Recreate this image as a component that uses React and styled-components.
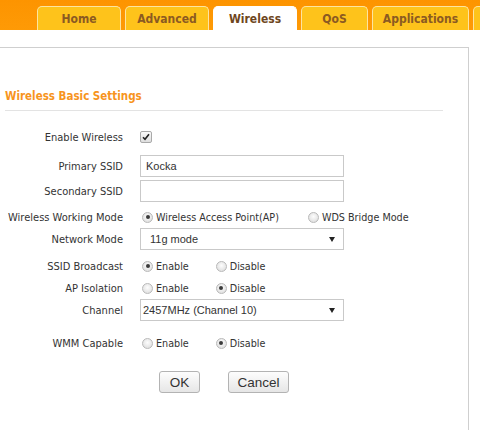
import React from "react";
import styled, { createGlobalStyle } from "styled-components";

const GlobalStyle = createGlobalStyle`
	body {
		margin: 0;
		background: #fff;
		font-family: "DejaVu Sans Condensed", "DejaVu Sans", sans-serif;
	}
`;

const Page = styled.div`
	width: 480px;
	height: 430px;
	overflow: hidden;
	background: #fff;
`;

const Header = styled.div`
	height: 30px;
	background: linear-gradient(180deg, #fd9400 0%, #fe9a06 100%);
	display: flex;
	align-items: flex-end;
	gap: 4px;
	padding-left: 37px;
	overflow: hidden;
`;

const Tab = styled.div`
	flex: none;
	box-sizing: border-box;
	width: ${(p) => p.$w}px;
	height: 24px;
	border: 1px solid ${(p) => (p.$active ? "#fff" : "#fde4a0")};
	border-bottom: none;
	border-radius: 5px 5px 0 0;
	background: ${(p) => (p.$active ? "#fff" : "#fec31b")};
	color: ${(p) => (p.$active ? "#6e4620" : "#8b5a22")};
	font-weight: bold;
	font-size: 12px;
	display: flex;
	align-items: center;
	justify-content: center;
`;

const Content = styled.div`
	margin-top: 17px;
	width: 469px;
	box-sizing: border-box;
	border-top: 1px solid #cfcfcf;
	border-right: 1px solid #cfcfcf;
	height: 400px;
	padding: 41px 0 0 5px;
`;

const Title = styled.div`
	width: 438px;
	color: #f7941d;
	font-weight: bold;
	font-size: 11.5px;
	padding-bottom: 7px;
	border-bottom: 1px solid #e3e3e3;
`;

const Form = styled.div`
	margin-left: -5px;
	padding-top: 15px;
`;

const Row = styled.div`
	display: flex;
	align-items: center;
	height: 22px;
	margin-top: ${(p) => p.$mt || 0}px;
`;

const Label = styled.div`
	width: 123px;
	flex: none;
	text-align: right;
	font-size: 11px;
	color: #333;
	padding-right: 17px;
`;

const Controls = styled.div`
	display: flex;
	align-items: center;
`;

const CheckBox = styled.span`
	width: 10px;
	height: 10px;
	border: 1px solid #a9a9a9;
	border-radius: 2px;
	background: linear-gradient(#fafafa, #dedede);
	display: flex;
	align-items: center;
	justify-content: center;
`;

const Option = styled.label`
	display: flex;
	align-items: center;
	font-size: 10.7px;
	color: #333;
	margin-left: 2px;
	margin-right: ${(p) => p.$mr}px;
`;

const RadioDot = styled.span`
	width: 9px;
	height: 9px;
	border: 1px solid #b9b9b9;
	border-radius: 50%;
	background: radial-gradient(circle at 50% 40%, #fdfdfd, #d8d8d8);
	margin-right: 3px;
	display: flex;
	align-items: center;
	justify-content: center;

	&::after {
		content: "";
		width: 4px;
		height: 4px;
		border-radius: 50%;
		background: ${(p) => (p.$on ? "#3a3a3a" : "transparent")};
	}
`;

const Field = styled.div`
	box-sizing: border-box;
	width: 204px;
	height: 22px;
	border: 1px solid #c9c9c9;
	background: #fff;
	display: flex;
	align-items: center;
	padding-left: ${(p) => p.$pl}px;
	padding-right: 8px;
	font-family: "Liberation Sans", Arial, sans-serif;
	font-size: 11px;
	color: #333;
`;

const FieldText = styled.span`
	flex: 1;
`;

const Arrow = styled.span`
	width: 0;
	height: 0;
	border-left: 3px solid transparent;
	border-right: 3px solid transparent;
	border-top: 5px solid #222;
`;

const Buttons = styled.div`
	display: flex;
	gap: 28px;
	padding-left: 159px;
	margin-top: 17px;
`;

const Button = styled.button`
	box-sizing: border-box;
	width: ${(p) => p.$w}px;
	height: 22px;
	border: 1px solid #b3b3b3;
	border-radius: 3px;
	background: linear-gradient(#fdfdfd, #e6e6e6);
	font-family: "Liberation Sans", Arial, sans-serif;
	font-size: 13.5px;
	color: #333;
	padding: 0;
`;

const tabs = [
	{ name: "Home", w: 84 },
	{ name: "Advanced", w: 84 },
	{ name: "Wireless", w: 84, active: true },
	{ name: "QoS", w: 67 },
	{ name: "Applications", w: 97 },
	{ name: "", w: 40 },
];

function Radio({ on, children, mr = 28 }) {
	return (
		<Option $mr={mr}>
			<RadioDot $on={on} />
			{children}
		</Option>
	);
}

function Toggle({ value }) {
	return (
		<Controls>
			<Radio on={value} mr={25}>Enable</Radio>
			<Radio on={!value}>Disable</Radio>
		</Controls>
	);
}

export default function App() {
	return (
		<Page>
			<GlobalStyle />
			<Header>
				{tabs.map((t, i) => (
					<Tab key={i} $w={t.w} $active={t.active}>
						{t.name}
					</Tab>
				))}
			</Header>
			<Content>
				<Title>Wireless Basic Settings</Title>
				<Form>
					<Row>
						<Label>Enable Wireless</Label>
						<CheckBox>
							<svg width="8" height="8" viewBox="0 0 8 8">
								<path d="M1 4.2 L3 6.3 L7 1.2" fill="none" stroke="#222" strokeWidth="1.6" />
							</svg>
						</CheckBox>
					</Row>
					<Row $mt={7}>
						<Label>Primary SSID</Label>
						<Field $pl={5}>Kocka</Field>
					</Row>
					<Row $mt={3}>
						<Label>Secondary SSID</Label>
						<Field $pl={5} />
					</Row>
					<Row $mt={4}>
						<Label>Wireless Working Mode</Label>
						<Controls>
							<Radio on mr={27}>Wireless Access Point(AP)</Radio>
							<Radio>WDS Bridge Mode</Radio>
						</Controls>
					</Row>
					<Row>
						<Label>Network Mode</Label>
						<Field $pl={9}>
							<FieldText>11g mode</FieldText>
							<Arrow />
						</Field>
					</Row>
					<Row $mt={5}>
						<Label>SSID Broadcast</Label>
						<Toggle value />
					</Row>
					<Row>
						<Label>AP Isolation</Label>
						<Toggle value={false} />
					</Row>
					<Row>
						<Label>Channel</Label>
						<Field $pl={2}>
							<FieldText>2457MHz (Channel 10)</FieldText>
							<Arrow />
						</Field>
					</Row>
					<Row $mt={11}>
						<Label>WMM Capable</Label>
						<Toggle value={false} />
					</Row>
					<Buttons>
						<Button $w={41}>OK</Button>
						<Button $w={61}>Cancel</Button>
					</Buttons>
				</Form>
			</Content>
		</Page>
	);
}
